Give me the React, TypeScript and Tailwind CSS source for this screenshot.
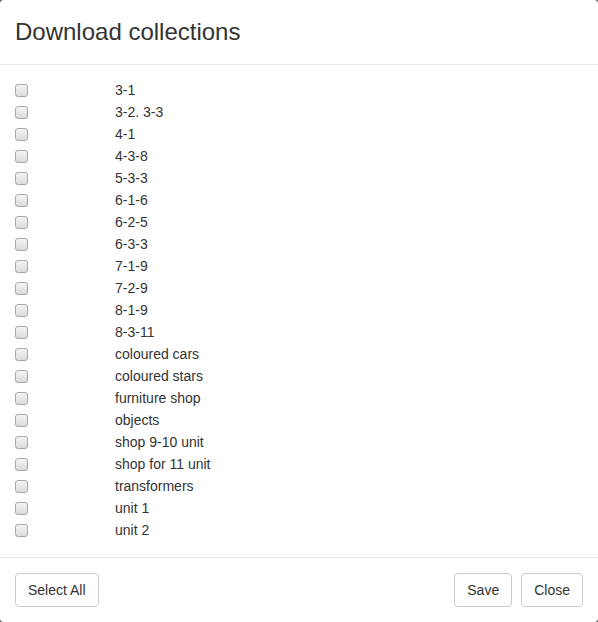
const items = [
  '3-1',
  '3-2. 3-3',
  '4-1',
  '4-3-8',
  '5-3-3',
  '6-1-6',
  '6-2-5',
  '6-3-3',
  '7-1-9',
  '7-2-9',
  '8-1-9',
  '8-3-11',
  'coloured cars',
  'coloured stars',
  'furniture shop',
  'objects',
  'shop 9-10 unit',
  'shop for 11 unit',
  'transformers',
  'unit 1',
  'unit 2',
];

const btn =
  'h-[34px] px-3 rounded-[4px] border border-[#ccc] bg-white text-[14px] text-[#333] leading-none';

export default function App() {
  return (
    <div className="w-[598px] h-[622px] bg-[#666] font-['Liberation_Sans',Arial,sans-serif]">
      <div className="w-full h-full bg-white rounded-[4px] flex flex-col">
        {/* header */}
        <div className="h-[65px] px-[15px] border-b border-[#e5e5e5] flex items-center">
          <h4 className="text-[24px] text-[#333] leading-none">Download collections</h4>
        </div>
        {/* body */}
        <div className="px-[15px] pt-[14px] pb-[16px] flex flex-col">
          {items.map((name) => (
            <label key={name} className="h-[22px] flex items-center text-[14px] text-[#333]">
              <span className="w-[13px] h-[13px] rounded-[3px] border border-[#a8a8a8] bg-gradient-to-b from-[#f4f4f4] to-[#dcdcdc] shrink-0" />
              <span className="ml-[87px]">{name}</span>
            </label>
          ))}
        </div>
        {/* footer */}
        <div className="border-t border-[#e5e5e5] p-[15px] flex items-center">
          <button className={btn}>Select All</button>
          <div className="ml-auto flex gap-[9px]">
            <button className={btn}>Save</button>
            <button className={btn}>Close</button>
          </div>
        </div>
      </div>
    </div>
  );
}
